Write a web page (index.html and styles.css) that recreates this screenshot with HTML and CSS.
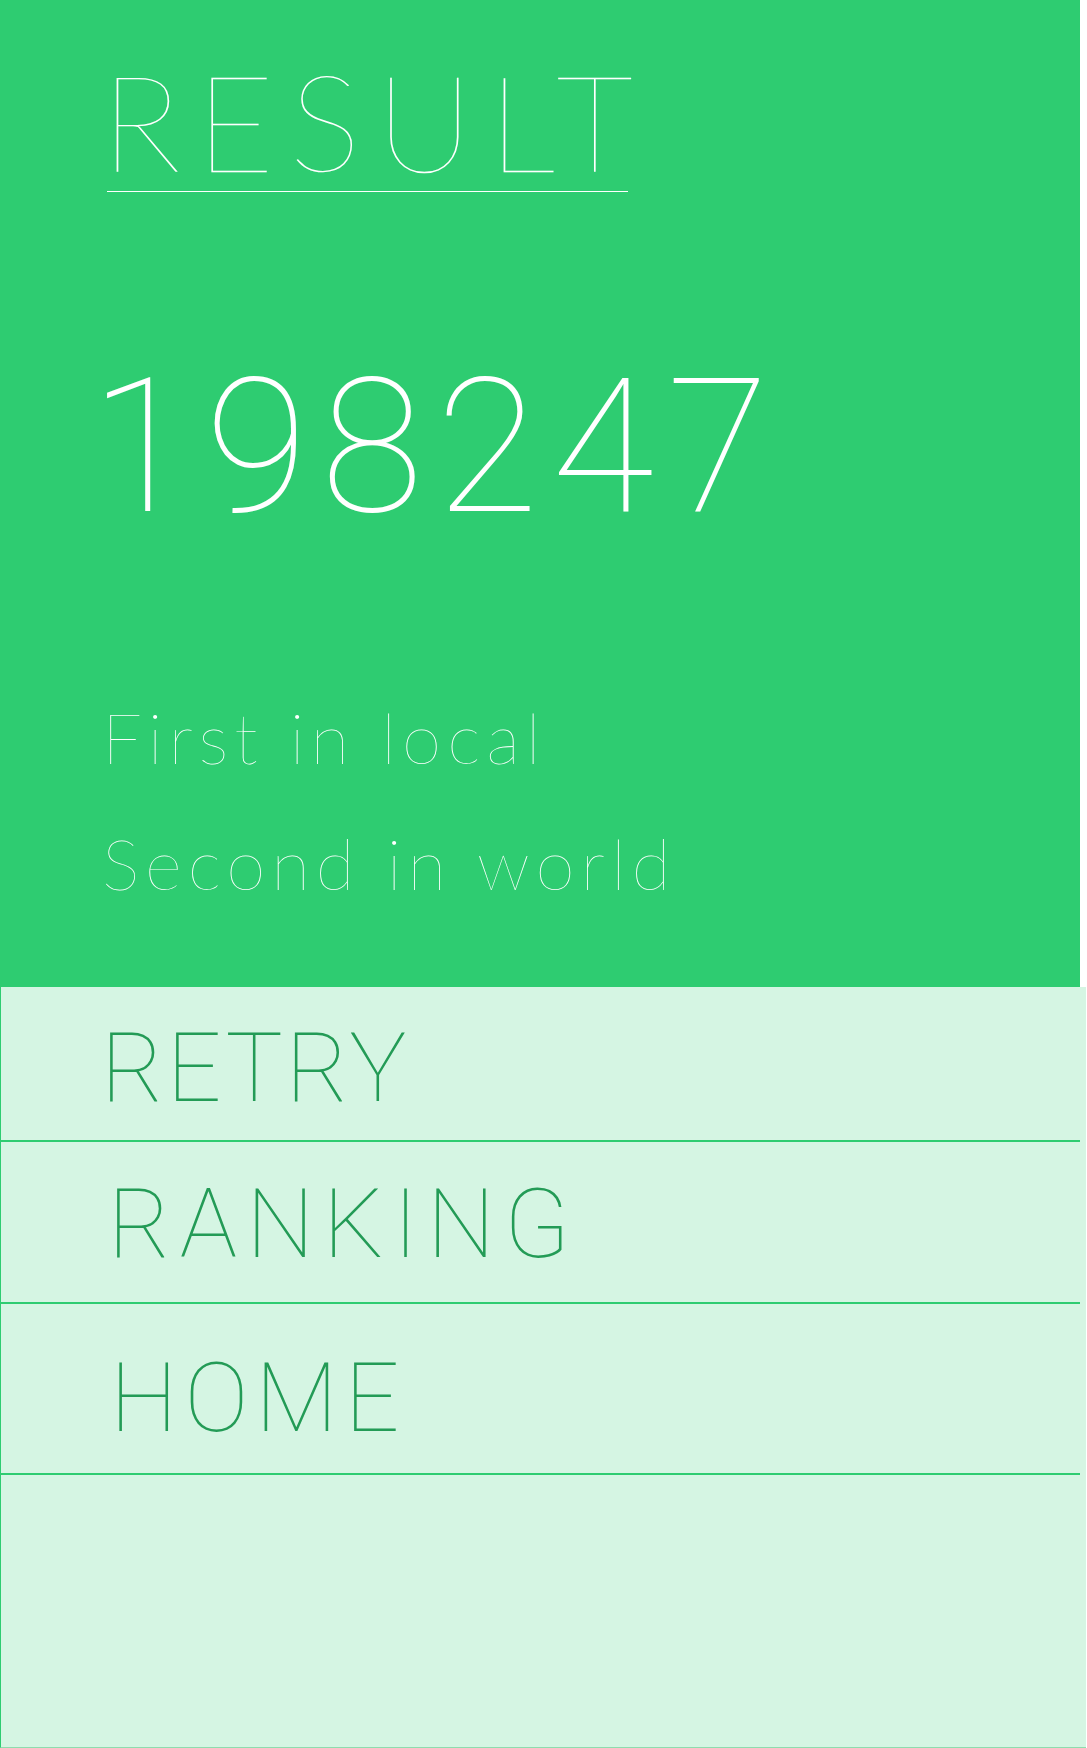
FILE: index.html
```html
<!DOCTYPE html>
<html lang="en">
<head>
<meta charset="utf-8">
<title>Result</title>
<link rel="stylesheet" href="styles.css">
</head>
<body>
<section class="result">
  <h1 class="result-title"><span class="result-title-text">RESULT</span></h1>
  <div class="result-score">198247</div>
  <p class="result-line">First in local</p>
  <p class="result-line">Second in world</p>
</section>
<nav class="menu">
  <a class="menu-item menu-retry" href="#">RETRY</a>
  <a class="menu-item menu-ranking" href="#">RANKING</a>
  <a class="menu-item menu-home" href="#">HOME</a>
</nav>
</body>
</html>
```
FILE: styles.css
```css
html, body {
  margin: 0;
  padding: 0;
  background: #ffffff;
}

body {
  font-family: "Lato", "Inter", sans-serif;
  font-weight: 100;
}

.result {
  box-sizing: border-box;
  width: 1080px;
  height: 987px;
  background: #2ecc71;
  color: #ffffff;
  padding: 53px 0 0 107px;
}

.result-title {
  display: inline-block;
  margin: 0;
  font-size: 135px;
  font-weight: 100;
  line-height: 1;
  letter-spacing: 15px;
  padding: 0 0 3px 0;
  border-bottom: 1px solid #ffffff;
}

.result-title-text {
  margin: 0 -20px 0 -6px;
}

.result-score {
  margin: 162px 0 0 -17px;
  font-family: "Roboto", "Lato", sans-serif;
  font-size: 187px;
  font-weight: 100;
  line-height: 1;
  letter-spacing: 13px;
}

.result-line {
  margin: 0 0 0 -5px;
  font-size: 71px;
  font-weight: 100;
  line-height: 126px;
  letter-spacing: 6px;
}

.result-score + .result-line {
  margin-top: 133px;
}

.menu {
  box-sizing: border-box;
  width: 1086px;
  height: 761px;
  background: #d5f5e3;
  border-left: 1px solid #2ecc71;
  border-bottom: 1px solid #8fdcae;
  display: flex;
  flex-direction: column;
}

.menu-item {
  box-sizing: border-box;
  width: 1079px;
  display: flex;
  align-items: center;
  padding-left: 100px;
  font-family: "Roboto", "Lato", sans-serif;
  font-size: 96px;
  font-weight: 100;
  line-height: 1;
  color: #239b56;
  text-decoration: none;
  border-bottom: 2px solid #2ecc71;
}

.menu-retry { height: 155px; padding-top: 8px; letter-spacing: 3px; }
.menu-ranking { height: 162px; padding-left: 107px; padding-top: 4px; letter-spacing: 9px; }
.menu-home { height: 171px; padding-left: 109px; padding-top: 19px; letter-spacing: 7px; }
```
